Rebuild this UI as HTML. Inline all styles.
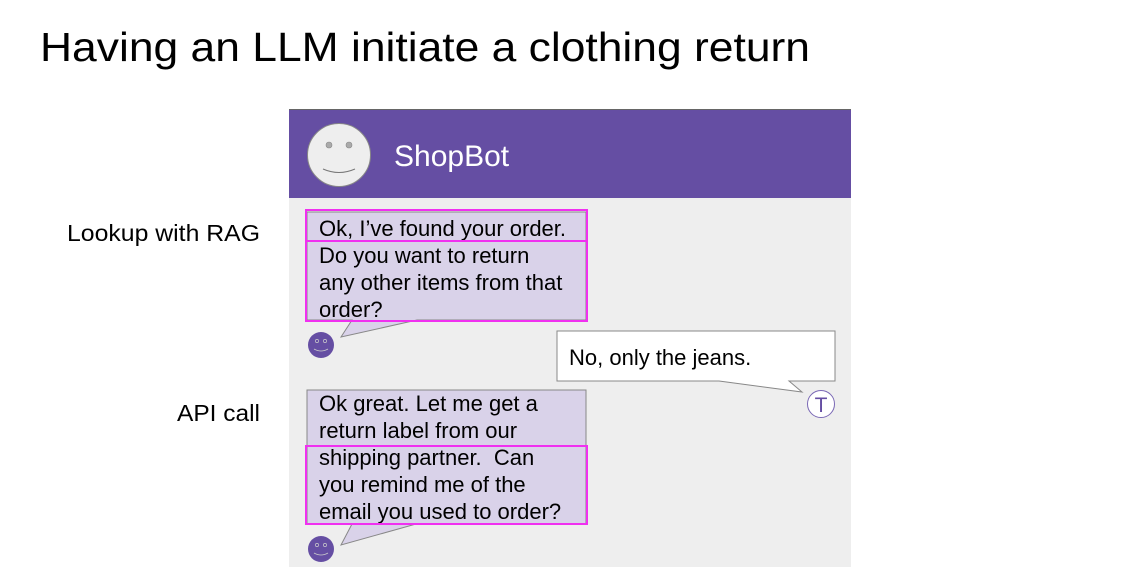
<!DOCTYPE html>
<html><head><meta charset="utf-8"><style>
html,body{margin:0;padding:0;background:#fff;}
svg{display:block;font-family:"Liberation Sans",Arial,sans-serif;}
</style></head><body>
<svg width="1126" height="567" viewBox="0 0 1126 567" xmlns="http://www.w3.org/2000/svg">
<text x="40" y="61" font-size="41" fill="#000" textLength="770" lengthAdjust="spacingAndGlyphs">Having an LLM initiate a clothing return</text>
<text x="67" y="241" font-size="23" fill="#000" textLength="193" lengthAdjust="spacingAndGlyphs">Lookup with RAG</text>
<text x="177" y="421" font-size="23" fill="#000" textLength="83" lengthAdjust="spacingAndGlyphs">API call</text>
<rect x="289" y="109" width="562" height="458" fill="#eeeeee"/>
<rect x="289" y="109" width="562" height="89" fill="#654ea3"/>
<line x1="289" y1="109.5" x2="851" y2="109.5" stroke="#666" stroke-width="1"/>
<circle cx="339" cy="155" r="31.5" fill="#eeeeee" stroke="#888" stroke-width="1"/>
<circle cx="329" cy="145" r="3" fill="#aaa" stroke="#888" stroke-width="0.6"/>
<circle cx="349" cy="145" r="3" fill="#aaa" stroke="#888" stroke-width="0.6"/>
<path d="M323 169 Q339 176 355 169" fill="none" stroke="#777" stroke-width="1"/>
<text x="394" y="166" font-size="30" fill="#fff">ShopBot</text>
<!-- bubble 1 -->
<path d="M307 212 H586 V320 H417 L341 337 L352 320 H307 Z" fill="#d9d2e9" stroke="#888" stroke-width="1"/>
<g font-size="22" fill="#000">
<text x="319" y="236">Ok, I’ve found your order.</text>
<text x="319" y="263">Do you want to return</text>
<text x="319" y="290">any other items from that</text>
<text x="319" y="317">order?</text>
</g>
<rect x="306" y="210" width="281" height="31" fill="none" stroke="#f030f0" stroke-width="2"/>
<rect x="306" y="241" width="281" height="80" fill="none" stroke="#f030f0" stroke-width="2"/>
<circle cx="321" cy="345" r="13" fill="#654ea3"/>
<circle cx="317" cy="341" r="1.6" fill="none" stroke="#ccc" stroke-width="0.7"/>
<circle cx="325" cy="341" r="1.6" fill="none" stroke="#ccc" stroke-width="0.7"/>
<path d="M314 349 Q321 353 328 349" fill="none" stroke="#ccc" stroke-width="0.8"/>
<!-- user bubble -->
<path d="M557 331 H835 V381 H789 L802 392 L719 381 H557 Z" fill="#fff" stroke="#888" stroke-width="1"/>
<text x="569" y="365" font-size="22" fill="#000">No, only the jeans.</text>
<circle cx="821" cy="404" r="13.5" fill="#fff" stroke="#7a68b5" stroke-width="1"/>
<text x="821" y="412" font-size="21" fill="#654ea3" text-anchor="middle">T</text>
<!-- bubble 2 -->
<path d="M307 390 H586 V524 H416 L341 545 L352 524 H307 Z" fill="#d9d2e9" stroke="#888" stroke-width="1"/>
<g font-size="22" fill="#000">
<text x="319" y="411">Ok great. Let me get a</text>
<text x="319" y="438">return label from our</text>
<text x="319" y="465">shipping partner.&#160; Can</text>
<text x="319" y="492">you remind me of the</text>
<text x="319" y="519">email you used to order?</text>
</g>
<rect x="306" y="446" width="281" height="78" fill="none" stroke="#f030f0" stroke-width="2"/>
<circle cx="321" cy="549" r="13" fill="#654ea3"/>
<circle cx="317" cy="545" r="1.6" fill="none" stroke="#ccc" stroke-width="0.7"/>
<circle cx="325" cy="545" r="1.6" fill="none" stroke="#ccc" stroke-width="0.7"/>
<path d="M314 553 Q321 557 328 553" fill="none" stroke="#ccc" stroke-width="0.8"/>
</svg>
</body></html>
